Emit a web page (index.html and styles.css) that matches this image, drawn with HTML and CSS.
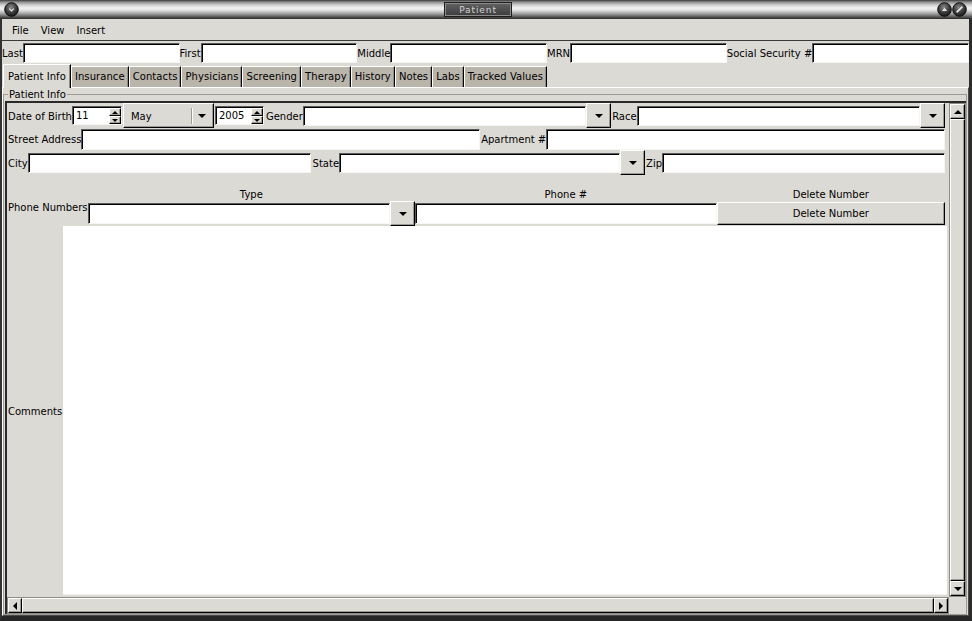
FILE: index.html
```html
<!DOCTYPE html>
<html>
<head>
<meta charset="utf-8">
<title>Patient</title>
<link rel="stylesheet" href="styles.css">
</head>
<body>
<div class="window">
  <div class="titlebar">
    <span class="wbtn">
      <svg width="15" height="15" viewBox="0 0 15 15"><defs><radialGradient id="wg1" cx="45%" cy="35%" r="65%"><stop offset="0" stop-color="#8a8a8a"/><stop offset="0.6" stop-color="#3c3c3c"/><stop offset="1" stop-color="#1a1a1a"/></radialGradient></defs><circle cx="7.5" cy="7.5" r="6.8" fill="url(#wg1)" stroke="#0e0e0e" stroke-width="1"/><path d="M5.2 6.6 L7.5 8.9 L9.8 6.6" fill="none" stroke="#e6e6e6" stroke-width="1.3"/></svg>
    </span>
    <span class="tspace"></span>
    <span class="ttitle">Patient</span>
    <span class="tspace"></span>
    <span class="wbtn">
      <svg width="15" height="15" viewBox="0 0 15 15"><defs><radialGradient id="wg2" cx="45%" cy="35%" r="65%"><stop offset="0" stop-color="#8a8a8a"/><stop offset="0.6" stop-color="#3c3c3c"/><stop offset="1" stop-color="#1a1a1a"/></radialGradient></defs><circle cx="7.5" cy="7.5" r="6.8" fill="url(#wg2)" stroke="#0e0e0e" stroke-width="1"/><path d="M4.8 9 L7.5 5.8 L10.2 9 Z" fill="#e0e0e0"/></svg>
    </span>
    <span class="wbtn">
      <svg width="15" height="15" viewBox="0 0 15 15"><defs><radialGradient id="wg3" cx="45%" cy="35%" r="65%"><stop offset="0" stop-color="#8a8a8a"/><stop offset="0.6" stop-color="#3c3c3c"/><stop offset="1" stop-color="#1a1a1a"/></radialGradient></defs><circle cx="7.5" cy="7.5" r="6.8" fill="url(#wg3)" stroke="#0e0e0e" stroke-width="1"/><path d="M4.6 10.4 L10.4 4.6" fill="none" stroke="#ececec" stroke-width="1.5"/></svg>
    </span>
  </div>
  <div class="frame">
    <div class="menubar"><span>File</span><span>View</span><span>Insert</span></div>
    <div class="namerow">
      <span class="lbl">Last</span><span class="entry"></span>
      <span class="lbl">First</span><span class="entry"></span>
      <span class="lbl">Middle</span><span class="entry"></span>
      <span class="lbl">MRN</span><span class="entry"></span>
      <span class="lbl">Social Security #</span><span class="entry"></span>
    </div>
    <div class="tabs">
      <span class="tab active">Patient Info</span>
      <span class="tab">Insurance</span>
      <span class="tab">Contacts</span>
      <span class="tab">Physicians</span>
      <span class="tab">Screening</span>
      <span class="tab">Therapy</span>
      <span class="tab">History</span>
      <span class="tab">Notes</span>
      <span class="tab">Labs</span>
      <span class="tab">Tracked Values</span>
    </div>
    <div class="notebook">
      <fieldset class="group">
        <legend>Patient Info</legend>
        <div class="scrolled">
          <div class="scroll-main">
            <div class="viewport">
              <div class="row r1">
                <span class="lbl">Date of Birth</span>
                <span class="spin spin-day"><span class="spin-val">11</span><span class="spin-btns"><span class="sb"><i class="t-up-s"></i></span><span class="sb"><i class="t-dn-s"></i></span></span></span>
                <span class="optmenu"><span class="opt-text">May</span><span class="opt-sep"></span><i class="t-dn"></i></span>
                <span class="spin spin-year"><span class="spin-val">2005</span><span class="spin-btns"><span class="sb"><i class="t-up-s"></i></span><span class="sb"><i class="t-dn-s"></i></span></span></span>
                <span class="lbl">Gender</span>
                <span class="combo"><span class="entry"></span><span class="drop"><i class="t-dn"></i></span></span>
                <span class="lbl ml1">Race</span>
                <span class="combo"><span class="entry"></span><span class="drop"><i class="t-dn"></i></span></span>
              </div>
              <div class="row r2">
                <span class="lbl">Street Address</span>
                <span class="entry tall"></span>
                <span class="lbl ml1">Apartment #</span>
                <span class="entry tall"></span>
              </div>
              <div class="row r3">
                <span class="lbl">City</span>
                <span class="entry"></span>
                <span class="lbl ml2">State</span>
                <span class="combo"><span class="entry"></span><span class="drop"><i class="t-dn"></i></span></span>
                <span class="lbl ml1">Zip</span>
                <span class="entry"></span>
              </div>
              <div class="phone">
                <span class="lbl">Phone Numbers</span>
                <div class="phone-grid">
                  <span class="ph">Type</span>
                  <span class="ph">Phone #</span>
                  <span class="ph">Delete Number</span>
                  <span class="combo"><span class="entry tall"></span><span class="drop"><i class="t-dn"></i></span></span>
                  <span class="entry tall"></span>
                  <span class="button">Delete Number</span>
                </div>
              </div>
              <div class="comments">
                <span class="lbl">Comments</span>
                <div class="textarea"></div>
              </div>
            </div>
            <div class="vscroll">
              <span class="sbtn"><i class="t-up"></i></span>
              <span class="slider"></span>
              <span class="sbtn"><i class="t-dn"></i></span>
            </div>
          </div>
          <div class="hrow">
            <div class="hscroll">
              <span class="sbtn h"><i class="t-lt"></i></span>
              <span class="slider"></span>
              <span class="sbtn h"><i class="t-rt"></i></span>
            </div>
            <div class="corner"></div>
          </div>
        </div>
      </fieldset>
    </div>
  </div>
</div>
</body>
</html>
```
FILE: styles.css
```css
* { box-sizing: border-box; }
html, body { margin: 0; padding: 0; }
body {
  width: 972px; height: 621px; overflow: hidden;
  background: #2a2a2a;
  font-family: "DejaVu Sans", "Noto Sans", sans-serif;
  font-size: 10px; line-height: 12px; color: #000;
}
.window { width: 972px; height: 621px; display: flex; flex-direction: column; }

/* title bar */
.titlebar {
  height: 19px; flex: none; display: flex; align-items: center;
  padding: 0 5px 0 4px;
  background: linear-gradient(to bottom, #3a3a3a 0px, #8e8e8e 2px, #cfcfcf 5px, #f2f2f2 8px, #e4e4e4 10px, #b0b0b0 13px, #6c6c6c 16px, #3c3c3c 18px, #2a2a2a 19px);
}
.wbtn { width: 15px; height: 15px; display: block; }
.wbtn svg { display: block; }
.tspace { flex: 1; }
.ttitle {
  width: 68px; height: 15px; display: flex; align-items: center; justify-content: center;
  background: linear-gradient(#626262, #3c3c3c);
  border: 1px solid #1e1e1e; box-shadow: inset 0 0 0 1px #8c8c8c;
  color: #d2d2d2; font-size: 9px; letter-spacing: 0.9px; padding-top: 1px;
}

/* frame */
.frame {
  flex: 1; min-height: 0; display: flex; flex-direction: column;
  background: #dcdad5;
  border-left: 2px solid #333; border-right: 3px solid #2c2c2c; border-bottom: 5px solid #262626;
}
.menubar {
  height: 22px; flex: none; display: flex; align-items: center;
  padding-left: 4px; border-bottom: 1px solid #3a3a3a;
}
.menubar span { padding: 2px 6px 0; }

.lbl { white-space: nowrap; flex: none; padding-top: 2px; }
.ml1 { margin-left: 1px; }
.ml2 { margin-left: 2px; }

.entry {
  display: block; height: 20px; flex: 1 1 0; min-width: 0;
  background: #fff;
  border: 1px solid; border-color: #5a5a5a #f6f5f3 #f6f5f3 #5a5a5a;
  box-shadow: inset 1px 1px 0 #000;
}
.entry.tall { height: 21px; }

.namerow { height: 23px; flex: none; display: flex; align-items: center; }
.namerow .entry { height: 20px; }

/* tabs */
.tabs {
  height: 23px; flex: none; display: flex; align-items: flex-end;
  padding-left: 1px; position: relative; z-index: 1;
}
.tab {
  height: 21px; display: flex; align-items: center; padding: 0 3px;
  background: #bab5ab;
  border: 1px solid; border-bottom: 0; border-color: #fff #000 transparent #fff;
  box-shadow: inset -1px 0 0 #8f8c86;
  white-space: nowrap; letter-spacing: 0.08px;
}
.tab.active {
  height: 24px; padding: 0 4px; margin-bottom: -1px;
  background: #dcdad5;
}

.notebook {
  flex: 1; min-height: 0; display: flex; flex-direction: column;
  border: 1px solid; border-color: #fff #4a4a4a #4a4a4a #fff;
}
fieldset.group {
  flex: 1; min-height: 0; min-width: 0;
  margin: 0 1px 0 0; padding: 0 0 0 1px;
  border: 1px solid #9d9b96;
  display: flex; flex-direction: column;
}
fieldset.group legend { padding: 1px 1px 0; margin-left: 3px; line-height: 12px; }

.scrolled {
  flex: 1; min-height: 0; display: flex; flex-direction: column;
  border-style: solid; border-width: 2px 0 0 2px; border-color: #2a2a2a;
}
.scroll-main { flex: 1; min-height: 0; display: flex; }
.viewport {
  flex: 1; min-width: 0; display: flex; flex-direction: column;
  padding: 0 0 2px 1px;
}

.row { display: flex; align-items: center; padding-right: 4px; flex: none; }
.r1 { height: 25px; }
.r2 { height: 22px; }
.r3 { height: 25px; }

/* raised */
.drop, .optmenu, .button, .sb, .sbtn, .slider {
  background: #dcdad5;
  border: 1px solid; border-color: #fff #000 #000 #fff;
  box-shadow: inset -1px -1px 0 #9d9b96;
}

.combo { display: flex; align-items: center; flex: 1 1 25px; min-width: 0; }
.drop {
  width: 25px; height: 25px; flex: none;
  display: flex; align-items: center; justify-content: center;
}

.t-dn, .t-up, .t-lt, .t-rt, .t-up-s, .t-dn-s { display: block; width: 0; height: 0; }
.t-dn { border-left: 4px solid transparent; border-right: 4px solid transparent; border-top: 4px solid #000; }
.t-up { border-left: 4px solid transparent; border-right: 4px solid transparent; border-bottom: 4px solid #000; }
.t-lt { border-top: 4px solid transparent; border-bottom: 4px solid transparent; border-right: 4px solid #000; }
.t-rt { border-top: 4px solid transparent; border-bottom: 4px solid transparent; border-left: 4px solid #000; }
.t-up-s { border-left: 3px solid transparent; border-right: 3px solid transparent; border-bottom: 3px solid #000; }
.t-dn-s { border-left: 3px solid transparent; border-right: 3px solid transparent; border-top: 3px solid #000; }

/* spin buttons */
.spin {
  display: flex; height: 19px; flex: none;
  background: #fff;
  border: 1px solid; border-color: #5a5a5a #f6f5f3 #f6f5f3 #5a5a5a;
  box-shadow: inset 1px 1px 0 #000;
  margin-right: 1px;
}
.spin-day { width: 50px; }
.spin-year { width: 49px; margin-right: 2px; }
.spin-val { flex: 1; padding: 3px 0 0 3px; }
.spin-btns { width: 12px; display: flex; flex-direction: column; padding-top: 1px; }
.sb { flex: 1; display: flex; align-items: center; justify-content: center; }

.optmenu {
  width: 91px; height: 25px; flex: none; margin-right: 1px;
  display: flex; align-items: center; padding: 0 7px 0 7px;
}
.opt-text { flex: 1; padding-top: 2px; }
.opt-sep { width: 2px; height: 16px; border-left: 1px solid #9d9b96; border-right: 1px solid #fff; margin-right: 5px; }

/* phone */
.phone { display: flex; align-items: center; margin-top: 12px; padding-right: 4px; flex: none; }
.phone-grid {
  flex: 1; min-width: 0; display: grid;
  grid-template-columns: 327fr 301fr 228fr;
  grid-template-rows: 14px 25px;
  align-items: center;
}
.ph { text-align: center; line-height: 14px; padding-top: 2px; }
.phone-grid .combo { height: 25px; }
.button {
  height: 23px; display: flex; align-items: center; justify-content: center;
}

.comments { flex: 1; min-height: 0; display: flex; align-items: center; padding-right: 2px; }
.comments .lbl { width: 55px; }
.textarea { flex: 1; align-self: stretch; background: #fff; border-bottom: 1px solid #f2f1ef; }

/* scrollbars */
.vscroll {
  width: 17px; flex: none; display: flex; flex-direction: column;
  background: #c9c6c0; border: 1px solid #8f8c86;
}
.sbtn { height: 15px; flex: none; display: flex; align-items: center; justify-content: center; }
.slider { flex: 1; }
.hrow { height: 17px; flex: none; display: flex; }
.hscroll {
  flex: 1; display: flex;
  background: #c9c6c0; border: 1px solid #8f8c86;
}
.sbtn.h { height: auto; width: 14px; }
.corner { width: 17px; flex: none; }
```
